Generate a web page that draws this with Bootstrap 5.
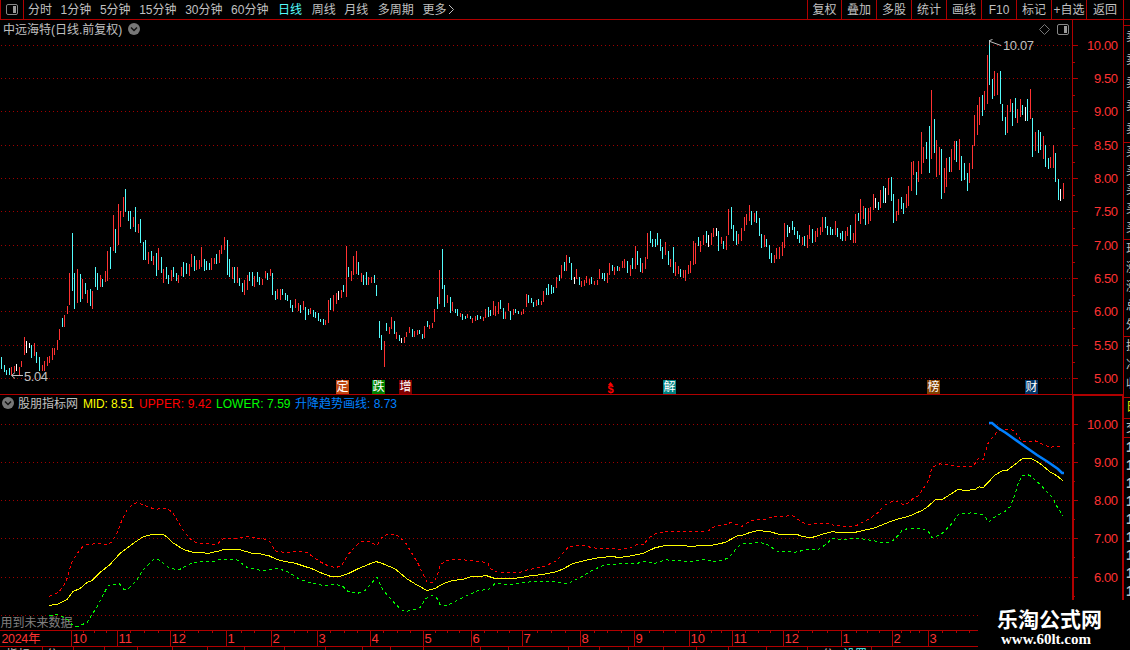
<!DOCTYPE html>
<html lang="zh-CN">
<head>
<meta charset="UTF-8">
<meta name="viewport" content="width=device-width, initial-scale=1.0">
<title>中远海特 日线</title>
<link href="https://cdn.jsdelivr.net/npm/bootstrap@5.3.0/dist/css/bootstrap.min.css" rel="stylesheet">
<style>
:root {
  --line: #b00000;
  --txt: #c0c0c0;
}

body {
  width: 1130px;
  height: 650px;
  background: #000;
  color: var(--txt);
  font-family: "Liberation Sans", "Noto Sans CJK SC", sans-serif;
  font-size: 12px;
  line-height: 18px;
}

svg {
  display: block;
}

.topbar {
  height: 20px;
  line-height: 20px;
  border-bottom: 1px solid var(--line);
}

.layout-btn {
  width: 24px;
  border-left: 1px solid var(--line);
  border-right: 1px solid var(--line);
}

.periods {
  gap: 8.6px;
  padding-left: 4px;
}

.periods .wide {
  margin-left: 1px;
}

.periods .active {
  color: #54fcfc;
}

.tool {
  width: 35px;
  border-left: 1px solid var(--line);
}

.tools .tool:first-child {
  width: 34px;
}

.tools .tool:last-child {
  width: 38px;
  border-right: 1px solid var(--line);
}

.tools {
  margin-right: 6px;
}

.charts {
  width: 1123px;
}

.price-panel {
  height: 375px;
}

.ind-panel {
  height: 235px;
}

.caption {
  left: 3px;
  top: 0;
  gap: 6px;
}

.caption span,
.ind-caption span {
  padding-top: 1px;
  margin-bottom: -1px;
}

.ind-caption {
  left: 2px;
  top: -1px;
}

.ind-caption .w-name { width: 65px; }
.ind-caption .w-mid { width: 56px; letter-spacing: -0.15px; }
.ind-caption .w-upper { width: 77px; letter-spacing: 0.1px; }
.ind-caption .w-lower { width: 79px; letter-spacing: 0.05px; }

.c-mid { color: #ffff00; }
.c-upper { color: #ff0000; }
.c-lower { color: #00ff00; }
.c-trend { color: #0080ff; }

.axis-num {
  font-size: 13px;
  fill: #ff3232;
}

.mark-txt {
  font-size: 12px;
  fill: #fff;
  text-anchor: middle;
}

.side {
  width: 7px;
  border-left: 1px solid var(--line);
}

.side > div {
  padding-left: 2px;
  border-top: 1px solid var(--line);
  white-space: nowrap;
}

.side .sp {
  height: 5px;
  border-top: 0;
}

.side .g1 { height: 117px; line-height: 23px; }
.side .g2 { height: 97px; line-height: 19px; }
.side .g3 { height: 61px; line-height: 19px; }
.side .g4 { height: 21px; line-height: 19px; color: #e0e000; }
.side .g5 { height: 19px; line-height: 18px; }
.side .g6 { height: 163px; line-height: 18px; font-weight: bold; font-size: 14px; overflow: hidden; }

.cover {
  left: 978px;
  top: 600px;
  width: 152px;
  height: 50px;
  background: #000;
  color: #fff;
  padding: 6px 0 0 19px;
}

.cover .site-name {
  font: bold 21px/24px "Noto Sans CJK SC", sans-serif;
}

.cover .site-url {
  font: bold 15px/18px "Liberation Serif", serif;
  padding-left: 4px;
}
</style>
<script src="https://cdn.jsdelivr.net/npm/bootstrap@5.3.0/dist/js/bootstrap.bundle.min.js"></script>
</head>
<body class="overflow-hidden position-relative">
<nav class="topbar d-flex">
  <div class="layout-btn d-flex align-items-center justify-content-center">
    <svg width="14" height="12" viewBox="0 0 14 12"><rect x="1.500" y=".5" width="11" height="10" rx="1.500" fill="none" stroke="#888"/><rect x="8" y="2" width="3" height="7" fill="#999"/></svg>
  </div>
  <div class="periods d-flex flex-grow-1 text-nowrap">
    <span>分时</span><span>1分钟</span><span>5分钟</span><span>15分钟</span><span>30分钟</span><span>60分钟</span>
    <span class="active wide">日线</span><span class="wide">周线</span><span>月线</span><span class="wide">多周期</span>
    <span class="d-flex align-items-center">更多<svg width="9" height="11" viewBox="0 0 9 11"><path d="M3 1l4.500 4.500-4.500 4.500" fill="none" stroke="#c0c0c0"/></svg></span>
  </div>
  <div class="tools d-flex text-center text-nowrap">
    <div class="tool">复权</div><div class="tool">叠加</div><div class="tool">多股</div><div class="tool">统计</div><div class="tool">画线</div><div class="tool">F10</div><div class="tool">标记</div><div class="tool">+自选</div><div class="tool">返回</div>
  </div>
</nav>

<div class="d-flex">
  <main class="charts">
    <section class="price-panel position-relative">
      <svg id="price" width="1123" height="375" viewBox="0 20 1123 375"></svg>
      <div class="caption position-absolute d-flex align-items-center">
        <span>中远海特(日线.前复权)</span>
        <svg width="12" height="12" viewBox="0 0 12 12"><circle cx="6" cy="6" r="6" fill="#777"/><path d="M3 4.500l3 3 3-3" fill="none" stroke="#111" stroke-width="1.500"/></svg>
      </div>
    </section>
    <section class="ind-panel position-relative">
      <svg id="indicator" width="1123" height="235" viewBox="0 395 1123 235"></svg>
      <div class="ind-caption position-absolute d-flex align-items-center text-nowrap">
        <svg class="me-1" width="12" height="12" viewBox="0 0 12 12"><circle cx="6" cy="6" r="6" fill="#777"/><path d="M3 4.500l3 3 3-3" fill="none" stroke="#111" stroke-width="1.500"/></svg>
        <span class="w-name">股朋指标网</span>
        <span class="w-mid c-mid">MID: 8.51</span>
        <span class="w-upper c-upper">UPPER: 9.42</span>
        <span class="w-lower c-lower">LOWER: 7.59</span>
        <span class="c-trend">升降趋势画线: 8.73</span>
      </div>
    </section>
    <svg id="timeline" width="1123" height="20" viewBox="0 630 1123 20"></svg>
  </main>

  <!-- quote list, cut off by the window edge -->
  <aside class="side overflow-hidden">
    <div class="sp"></div>
    <div class="g1">卖<br>卖<br>卖<br>卖<br>卖</div>
    <div class="g2">买<br>买<br>买<br>买<br>买</div>
    <div class="g2">现<br>涨<br>涨<br>总<br>外</div>
    <div class="g3">换<br>净<br>收</div>
    <div class="g4">日</div>
    <div class="g5">交</div>
    <div class="g6">1<br>1<br>1<br>1<br>1<br>1<br>1<br>1<br>1</div>
  </aside>
</div>

<div class="cover position-absolute text-nowrap">
  <div class="site-name">乐淘公式网</div>
  <div class="site-url">www.60lt.com</div>
</div>

<script>
const LINE = '#b00000';
const colors = { r: '#ff3232', c: '#54fcfc', w: '#ffffff' };

// one bar per day: x, high y, low y, colour
const bars = `
1,357,369,c 4,365,372,c 6,370,375,c 9,368,375,c 11,367,375,r 14,366,372,r 16,364,371,w 19,367,375,r 21,361,367,r 24,337,355,r
26,341,353,w 29,343,348,w 31,345,358,c 34,343,356,r 36,352,363,c 39,357,371,c 42,365,371,r 44,361,371,r 47,357,366,r 49,356,363,r
52,348,360,r 54,348,355,r 57,340,350,r 59,329,340,r 62,318,327,c 64,315,327,r 67,306,314,r 69,273,305,r 72,233,291,c 74,273,309,c
77,269,303,r 80,274,302,c 82,279,299,r 85,283,294,c 87,290,303,r 90,289,306,c 92,291,309,r 95,267,287,c 97,273,290,c 100,275,287,r
102,279,287,c 105,271,282,r 107,251,281,r 110,247,269,c 113,215,251,r 115,229,253,c 118,204,245,r 120,211,227,r 123,197,217,r 125,189,212,c
128,211,221,c 130,211,229,c 133,217,227,r 135,207,232,c 138,224,233,r 140,219,243,c 143,242,260,c 145,240,260,c 148,252,264,r 151,251,261,c
153,256,265,r 156,253,276,c 158,248,270,r 161,257,273,c 163,269,283,r 166,267,279,c 168,275,284,c 171,270,281,r 173,267,277,c 176,273,281,c
178,275,283,r 181,267,276,r 183,262,277,c 186,263,274,c 189,264,276,r 191,254,267,r 194,256,271,c 196,260,270,r 199,260,269,r 201,247,267,r
204,259,271,c 206,261,270,c 209,263,270,c 211,258,270,r 214,258,264,r 216,254,264,c 219,250,263,r 221,245,254,r 224,237,250,r 227,240,275,c
229,259,277,c 232,267,279,r 234,267,283,c 237,267,283,r 239,278,286,c 242,283,292,c 244,280,295,r 247,275,290,r 249,272,281,c 252,272,286,c
254,276,287,r 257,272,282,c 259,277,285,c 262,279,285,r 265,271,278,r 267,273,280,c 270,269,276,r 272,273,295,c 275,291,300,c 277,289,299,r
280,289,300,r 282,289,295,c 285,293,300,c 287,295,301,c 290,300,308,c 292,305,312,c 295,299,308,r 298,303,311,r 300,305,313,c 303,301,310,r
305,307,320,c 308,309,315,c 310,308,314,r 313,310,317,c 315,312,318,c 318,313,321,c 320,319,322,c 323,319,325,c 325,320,325,r 328,300,323,r
330,298,310,c 333,295,311,r 336,293,304,r 338,291,300,w 341,290,298,r 343,285,292,c 346,246,297,r 348,267,277,c 351,271,281,r 353,256,275,r
356,251,274,r 358,262,275,c 361,273,282,r 363,275,285,c 366,272,285,c 368,277,285,r 371,277,283,r 374,275,283,c 376,285,296,c 379,321,338,c
381,335,350,c 384,341,367,r 386,323,331,c 389,327,334,r 391,317,329,r 394,321,334,c 396,332,339,r 399,335,341,c 401,338,343,w 404,337,343,r
406,332,337,r 409,327,333,r 412,329,337,c 414,331,337,r 417,330,335,r 419,330,334,c 422,334,339,c 424,326,338,r 427,321,327,c 429,325,329,r
432,323,328,r 434,309,322,r 437,297,309,c 439,270,304,r 442,249,289,c 444,285,307,c 447,295,303,r 450,297,313,c 452,302,311,r 455,309,313,c
457,309,316,c 460,313,317,r 462,314,320,c 465,316,319,c 467,314,318,r 470,316,319,c 472,318,323,r 475,316,321,r 477,315,320,c 480,316,319,c
483,317,321,r 485,309,318,r 488,307,317,c 490,310,316,c 493,301,315,r 495,306,316,r 498,302,314,r 500,300,309,c 503,308,319,c 505,312,319,r
508,303,311,r 510,311,320,c 513,309,315,r 515,309,313,c 518,311,314,c 521,312,315,r 523,309,314,r 526,294,307,r 528,295,303,c 531,298,303,c
533,302,307,c 536,300,306,r 538,299,305,c 541,301,305,r 543,291,302,r 546,288,295,c 548,284,295,c 551,285,294,c 553,287,293,c 556,277,288,r
559,275,281,c 561,265,278,r 564,262,271,c 566,255,271,r 569,257,263,c 571,263,280,c 574,277,284,w 576,269,279,r 579,277,285,c 581,281,287,r
584,280,286,r 586,276,283,r 589,279,285,r 591,277,284,c 594,281,285,r 597,280,285,r 599,269,279,r 602,273,279,c 604,273,281,c 607,273,283,r
609,263,275,r 612,265,271,c 614,267,275,r 617,266,271,c 619,267,271,r 622,261,268,r 624,259,268,r 627,261,273,c 630,265,276,r 632,258,269,c
635,246,269,r 637,251,265,c 640,258,272,c 642,263,273,r 645,257,269,r 647,233,259,r 650,231,243,c 652,239,247,c 655,239,247,c 657,233,245,c
660,239,251,c 662,247,259,c 665,242,255,r 668,251,265,c 670,259,267,r 673,247,273,c 675,262,276,r 678,266,274,r 680,269,277,c 683,270,278,r
685,270,281,r 688,265,274,r 690,261,273,r 693,241,265,r 695,243,264,r 698,237,246,c 700,241,252,r 703,235,245,r 706,231,243,c 708,235,247,w
711,233,245,r 713,228,237,r 716,228,236,w 718,231,251,c 721,237,244,r 723,241,249,c 726,236,250,r 728,209,235,r 731,207,229,c 733,225,241,c
736,231,245,c 738,234,244,r 741,228,241,r 744,217,231,r 746,214,225,r 749,205,221,r 751,211,225,c 754,213,222,r 756,211,223,c 759,218,236,c
761,234,248,c 764,235,247,r 766,239,247,c 769,245,259,c 771,253,263,c 774,255,263,r 776,248,259,r 779,247,259,r 782,242,256,r 784,223,248,r
787,225,237,c 789,227,233,w 792,221,230,c 794,227,235,c 797,231,239,c 799,235,243,c 802,237,245,r 804,236,246,c 807,235,248,r 809,225,239,r
812,229,243,c 815,231,242,r 817,228,237,r 820,227,235,r 822,217,232,r 825,217,228,c 827,226,235,c 830,227,235,c 832,229,235,c 835,221,235,r
837,228,237,c 840,233,239,c 842,231,241,c 845,231,241,r 847,227,236,r 850,225,240,c 853,233,243,r 855,214,243,r 858,213,221,c 860,199,224,r
863,206,219,r 865,208,225,c 868,208,224,r 870,207,221,r 873,194,210,r 875,198,208,w 878,202,210,c 880,190,208,r 883,186,203,c 885,188,203,w
888,178,195,r 891,177,201,c 893,194,223,c 896,211,221,r 898,199,215,r 901,197,209,c 903,203,214,c 906,194,208,r 908,186,206,r 911,162,191,r
913,161,175,r 916,172,195,c 918,161,182,r 921,132,174,r 923,147,163,r 926,142,159,c 929,126,173,c 931,90,159,r 934,119,153,c 936,140,177,r
939,147,175,r 941,149,199,c 944,168,193,r 946,158,187,r 949,157,172,c 951,149,172,r 954,141,160,r 956,141,162,c 959,139,170,r 961,156,181,c
964,163,180,c 967,173,191,c 969,163,183,r 972,145,169,r 974,115,146,r 977,105,135,r 979,97,125,r 982,95,116,c 984,91,110,r 987,55,104,r
989,40,85,c 992,79,99,c 994,71,96,r 997,73,95,r 1000,71,104,c 1002,104,121,c 1005,117,135,c 1007,105,133,r 1010,99,112,r 1012,103,126,c
1015,98,118,c 1017,109,123,r 1020,99,117,r 1022,105,115,c 1025,107,121,w 1027,99,121,c 1030,89,119,r 1032,118,157,c 1035,132,151,r 1038,130,153,c
1040,132,150,c 1043,136,159,r 1045,145,167,c 1048,158,169,c 1050,157,168,r 1053,145,168,r 1055,153,182,c 1058,179,200,c 1060,189,201,w 1063,183,199,r`;

const mid = '49.5,606 53,604.5 58,604 67,599.5 73,591.5 80,588.5 87,582.5 92,580.5 100,572.5 110,564.5 120,553.5 133,543.5 143,536.8 152,534.5 163,534.5 167,536.8 173,542.8 184,549.8 194,552.5 209,553.2 218,551.2 224,549.5 239,549.5 253,553.5 260,553.8 269,555.8 277,559.5 285,561.5 295,563.2 312,568.8 322,573.2 330,576.2 339,576.5 348,573.8 358,568.8 370,563.8 376,561.5 383,563.8 395,568.8 407,578.8 415,583.8 427,590.5 435,588.5 443,583.8 452,580.5 462,579.5 471,576.8 480,576.5 486,575.5 495,578.5 513,578.5 526,576.8 530,575.8 543,574.5 555,572 562,569.5 573,563.5 587,560 600,557.5 613,556.5 618,557.5 628,556.5 643,553.5 655,547.8 665,545.5 683,545.5 690,546.3 712,545.2 725,542.5 737,536 743,535 749,532.8 758,530.5 770,531.8 780,534.5 798,534.8 803,536.8 812,537.5 823,534 833,531.5 838,532.8 853,532.8 875,527.8 893,520.5 910,515.8 922,510.5 928,506.5 935,500 943,499 958,489.5 965,490.5 975,489.5 979,486.8 983,487.8 988,482.5 995,475 1003,470.5 1007,470.3 1013,466 1022,458.8 1032,458.8 1040,463.5 1050,471.8 1057,475.8 1063,480.8';
const upper = '49.5,596.5 53,594.5 58,592.8 63,587 67,578.5 69,571.5 71,564 77,553.5 83,546.5 87,544.5 100,543.5 107,544.8 112,541.8 117,532.8 122,520 127,510 132,505 137,502.5 147,506.5 155,509.2 167,508.5 172,512 178,521.8 185,532.8 192,540.8 200,543.8 217,544.2 223,538.8 237,538.5 247,536.5 267,539.5 271,543 275,550.8 287,552.8 297,551.5 307,552.5 320,561.8 330,566.8 337,567.3 342,564.8 347,556 355,546.8 360,542 369,541.5 377,545.5 383,536 388,534.5 396,534.5 405,541.8 411,551.8 418,563.5 422,571.8 427,582 433,582.8 437,576.8 440,565 447,560.3 460,559.5 480,561.5 488,562.8 490,568.5 497,572 520,572.3 528,569.8 543,566.8 557,560.8 562,554 569,546.3 582,545.3 593,547.8 607,549 613,548.5 619,550 630,547.8 638,544 644,544.8 648,538.5 657,532.8 667,531.5 707,531.5 717,525.3 723,525.3 731,522.5 742,526.3 750,521.3 757,519 767,519 773,516.5 793,515.8 803,522.8 810,524.5 825,522.8 835,525.5 848,526.5 857,525.3 868,519.5 877,513.5 885,504.8 892,501.5 898,501.8 903,504.8 909,502.8 913,498.5 919,495.3 924,487.5 929,479.5 932,467.5 940,463.8 957,466.3 973,466.3 979,457.8 983,460 988,443.5 993,436.8 998,431 1010,428.5 1015,431.8 1022,441.8 1035,440.8 1050,447.5 1057,446 1063,446.8';
const lower = '49.5,615.5 58,614.5 63,617 69,620.8 73,625.5 78,626.5 87,622.5 92,614.8 97,606.8 102,596.8 108,586 119,583.5 124,589.3 128,588.8 137,580 143,570 153,560 159,559.8 170,568.8 180,569.3 192,562.8 200,561.5 213,561.5 219,559.8 237,559.8 247,567.3 263,570.8 278,568.5 287,571.5 300,579.5 313,583.5 327,586 333,584.5 342,585.5 348,591.5 357,593.5 365,590.8 372,582.5 377,577.5 383,590 390,598 400,608.8 405,611.5 413,610 420,607.8 426,598.5 433,595 437,598.5 440,604.5 447,605.5 460,599 477,591 489,589 495,583.5 512,584.5 533,581.5 550,581.5 569,583.5 573,580.8 583,576 592,570.5 603,565.5 620,563.5 637,563.5 643,561.5 655,563.5 665,559.8 690,561.5 705,559.5 717,561.8 727,558.5 732,554 737,547.8 742,543.8 760,542.5 767,544.3 777,551 795,552.3 807,549.5 818,549.5 825,545 832,538.8 847,539.3 857,538 885,542.8 892,541.3 898,535.5 903,529.5 910,528.5 922,528.8 928,530.8 932,537.5 940,535.3 945,530.8 952,523.5 959,513.8 973,512.8 983,514.8 989,521.8 995,516.8 1005,511.3 1010,506.8 1015,495 1018,484 1022,475.8 1027,474.3 1032,476.8 1043,487.5 1053,498.3 1058,508.5 1063,515.5';

const rect = (x, y, w, h, fill) => `<rect x="${x}" y="${y}" width="${w}" height="${h}" fill="${fill}" shape-rendering="crispEdges"/>`;
const text = (x, y, s, attrs = '') => `<text x="${x}" y="${y}" ${attrs}>${s}</text>`;
const gridRow = (y, end = 1071) => `<path d="M1 ${y + 0.5}H${end}" stroke="#a00000" stroke-dasharray="1 3" shape-rendering="crispEdges"/>`;
const poly = (pts, color, extra = '') => `<polyline points="${pts}" fill="none" stroke="${color}" ${extra}/>`;

// price panel
let out = '';
[45, 78, 111, 145, 178, 211, 245, 278, 311, 345, 378].forEach((y, i) => {
  out += gridRow(y) + rect(1073, y, 5, 1, LINE);
  if (i < 10) out += rect(1073, y + 17, 2, 1, LINE);
  const label = (10 - i * 0.5).toFixed(2);
  out += text(1118, y + 5, label, `class="axis-num" text-anchor="end" textLength="${label.length === 5 ? 31 : 24}"`);
});
bars.trim().split(/\s+/).forEach(b => {
  const [x, y1, y2, c] = b.split(',');
  out += rect(x, y1, 1, y2 - y1, colors[c]);
});
out += rect(1072, 20, 1, 375, LINE) + rect(0, 394, 1123, 1, LINE);
out += `<path d="M12 375.500H23M15 372.500l-3.500 3 3.500 3M990 41.500l11 4M989.500 45v-4.500l3-1" fill="none" stroke="#c0c0c0"/>`;
out += text(24, 381, '5.04', 'font-size="13" fill="#c0c0c0" textLength="24"');
out += text(1003, 50, '10.07', 'font-size="13" fill="#c0c0c0" textLength="31"');
[[336, '定', '#c04810'], [372, '跌', '#008000'], [399, '增', '#800000'], [663, '解', '#008080'], [927, '榜', '#804000'], [1025, '财', '#003466']].forEach(([x, s, bg]) => {
  out += rect(x, 380, 13, 14, bg) + text(x + 6.5, 391, s, 'class="mark-txt"');
});
out += `<path d="M608 385l2.500-3 2.500 3z" fill="#f00"/>` + text(607.5, 393, '$', 'font-size="11" font-weight="bold" fill="#f00"');
out += `<path d="M1044.500 24.500l5 5-5 5-5-5z" fill="none" stroke="#777"/>`;
out += `<rect x="1057.500" y="24.500" width="11" height="10" rx="1.500" fill="none" stroke="#888"/>` + rect(1064, 26, 3, 7, '#999');
document.getElementById('price').innerHTML = out;

// indicator panel
out = '';
[424, 462, 500, 538, 577].forEach((y, i) => {
  out += gridRow(y);
  out += rect(1074, y, 4, 1, LINE) + rect(1074, y + 19, 1, 1, LINE);
  const label = (10 - i).toFixed(2);
  out += text(1118, y + 5, label, `class="axis-num" text-anchor="end" textLength="${i ? 24 : 31}"`);
});
out += gridRow(615, 978);
out += rect(1072, 395, 2, 205, LINE) + rect(1122, 395, 1, 205, LINE) + rect(1072, 395, 51, 1, LINE);
out += text(0.5, 627, '用到未来数据', 'font-size="12" fill="#808080"');
out += poly(upper, '#ff0000', 'stroke-dasharray="3 3" shape-rendering="crispEdges"');
out += poly(lower, '#00ff00', 'stroke-dasharray="3 3" shape-rendering="crispEdges"');
out += poly(mid, '#ffff00', 'shape-rendering="crispEdges"');
out += poly('989,423 992,423 998,428 1006,433 1015,439.500 1027,448 1037,455 1048,462 1058,469 1062,473 1064,473', '#0080ff', 'stroke-width="2.600"');
document.getElementById('indicator').innerHTML = out;

// time axis
out = rect(0, 630, 978, 1, LINE) + rect(0, 646, 978, 1, LINE);
out += text(1.5, 643, '2024年', 'font-size="12.500" fill="#ff3232" textLength="39"');
[[71, 10], [117, 11], [170, 12], [226, 1], [271, 2], [317, 3], [370, 4], [423, 5], [471, 6], [522, 7], [580, 8], [634, 9], [689, 10], [732, 11], [783, 12], [841, 1], [892, 2], [928, 3]].forEach(([x, m]) => {
  out += rect(x, 631, 1, 15, LINE) + text(x + 1.5, 643, m, 'class="axis-num"');
});
[83, 94, 106, 130, 144, 158, 184, 198, 212, 241, 254, 294, 307, 330, 344, 357, 383, 397, 410, 435, 447, 459, 484, 497, 509, 537, 551, 565, 594, 607, 621, 649, 663, 675, 700, 711, 721, 745, 758, 770, 798, 812, 827, 856, 867, 879, 901, 910, 919, 942, 956, 969].forEach(x => {
  out += rect(x, 631, 1, 2, LINE);
});
[42, 73, 104, 137, 172, 207, 244, 284, 325, 362, 390, 423, 480, 508, 568, 599, 628, 663, 696, 728, 766, 807, 871].forEach(x => {
  out += rect(x, 647, 1, 3, LINE);
});
// tab names under the axis, only their tops are in view
out += text(6, 659, '指标', 'font-size="12" fill="#c0c0c0"') + text(46, 659, '分', 'font-size="12" fill="#c0c0c0"');
out += text(822, 659, '分', 'font-size="12" fill="#c0c0c0"') + text(843, 659, '设置', 'font-size="12" fill="#54fcfc"');
document.getElementById('timeline').innerHTML = out;
</script>
</body>
</html>
